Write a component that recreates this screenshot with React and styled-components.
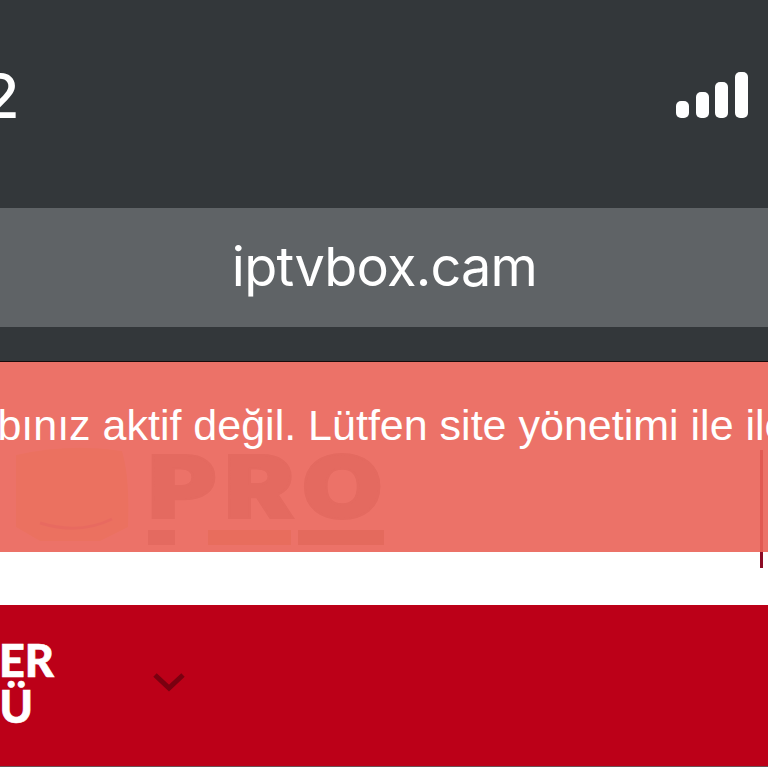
import React from 'react';
import styled, { createGlobalStyle } from 'styled-components';

const Global = createGlobalStyle`
  html, body { margin: 0; padding: 0; background: #fff; }
  body { width: 768px; height: 768px; overflow: hidden; }
`;
const Page = styled.div`
  width: 768px; height: 768px; overflow: hidden; display: flex; flex-direction: column;
  font-family: "Liberation Sans", Arial, sans-serif; background: #fff;
`;
const Chrome = styled.header`
  background: #33373a; height: 361px; display: flex; flex-direction: column; flex: none;
  border-bottom: 1px solid #1a0a0a; box-sizing: content-box;
`;
const StatusBar = styled.div`
  height: 208px; display: flex; align-items: flex-start; justify-content: space-between;
  padding: 72px 20px 0 0; box-sizing: border-box;
`;
const Time = styled.span`
  font-family: Inter, sans-serif; font-size: 61px; line-height: 52px; color: #fff; margin: -2px 0 0 -18px; font-weight: 500;
`;
const Signal = styled.div`
  display: flex; align-items: flex-end; gap: 6.6px; height: 46px;
`;
const Bar = styled.span`
  width: 13px; height: ${p => p.$h}px; background: #fff; border-radius: 5px; display: block;
`;
const UrlBar = styled.div`
  height: 119px; background: #5f6366; display: flex; align-items: center; justify-content: center;
  font-family: Inter, sans-serif; font-size: 54px; letter-spacing: -0.77px; color: #fff; padding: 0 0 2px 1px; box-sizing: border-box;
`;
const SiteHead = styled.div`
  position: relative; height: 243px; flex: none; background: #fff; overflow: hidden;
`;
const Logo = styled.div`
  position: absolute; left: 0; top: 85px; display: flex; align-items: flex-start; gap: 14px;
`;
const LogoWord = styled.div`
  display: flex; flex-direction: column; gap: 10px; width: 236px; padding-top: 8px;
`;
const Pro = styled.span`
  font-family: Inter, sans-serif; font-weight: 900; font-size: 86px; line-height: 65px; color: #a8a8a8;
  -webkit-text-stroke: 2px #a8a8a8; letter-spacing: 6px; transform: scaleX(1.22); transform-origin: left top; display: block;
`;
const TagRow = styled.div`
  display: flex; height: 15px;
`;
const Tag = styled.span`
  display: block; flex: ${p => p.$grow}; margin-left: ${p => p.$ml}px; background: ${p => p.$color};
`;
const Divider = styled.span`
  position: absolute; left: 760px; top: 88px; width: 3px; height: 118px; background: #8c0b25;
`;
const Alert = styled.div`
  position: absolute; left: 0; top: 0; width: 768px; height: 190px; box-sizing: border-box;
  background: rgba(234, 99, 88, 0.9); color: #fff; font-size: 43px; line-height: 48px;
  white-space: nowrap; padding-top: 39px; overflow: hidden;
`;
const AlertText = styled.span`
  display: block; margin-left: -103px;
`;
const Nav = styled.nav`
  height: 161px; flex: none; background: #bc0018; border-bottom: 1px solid #6b5055; display: flex; align-items: center;
  box-sizing: content-box; gap: 97px;
`;
const NavLabel = styled.div`
  font-family: Lato, sans-serif; font-weight: 900; font-size: 45px; line-height: 46px; color: #fff;
  -webkit-text-stroke: 0.6px #fff; padding-bottom: 6px;
  width: 54px; flex: none; display: flex; flex-direction: column; white-space: nowrap; align-items: flex-end;
`;
const Line = styled.span`
  display: block; margin-right: ${p => p.$mr}px;
`;
const Chevron = styled.svg`
  width: 36px; height: 24px; flex: none; margin-top: -6px;
`;

export default function App() {
  return (
    <Page>
      <Global />
      <Chrome>
        <StatusBar>
          <Time>2</Time>
          <Signal>
            <Bar $h={17} /><Bar $h={26} /><Bar $h={36} /><Bar $h={46} />
          </Signal>
        </StatusBar>
        <UrlBar>iptvbox.cam</UrlBar>
      </Chrome>
      <SiteHead>
        <Logo>
          <svg width="134" height="106" viewBox="0 0 134 106">
            <path d="M16 8 Q70 -4 122 4 Q130 30 128 80 L100 94 L40 94 L16 80 Z" fill="#f0f0b0" />
            <path d="M40 76 Q80 88 112 72" fill="none" stroke="#d4b0b0" strokeWidth="3" />
          </svg>
          <LogoWord>
            <Pro>PRO</Pro>
            <TagRow>
              <Tag $grow={27} $ml={0} $color="#a8a8a8" />
              <Tag $grow={82} $ml={33} $color="#d8c890" />
              <Tag $grow={85} $ml={7} $color="#b0a890" />
            </TagRow>
          </LogoWord>
        </Logo>
        <Divider />
        <Alert><AlertText>Hesabınız aktif değil. Lütfen site yönetimi ile iletişime geçin.</AlertText></Alert>
      </SiteHead>
      <Nav>
        <NavLabel>
          <Line $mr={0}>ER</Line>
          <Line $mr={21}>Ü</Line>
        </NavLabel>
        <Chevron viewBox="0 0 36 24">
          <path d="M4 4 L18 17 L32 4" fill="none" stroke="#7a0010" strokeWidth="5" />
        </Chevron>
      </Nav>
    </Page>
  );
}
